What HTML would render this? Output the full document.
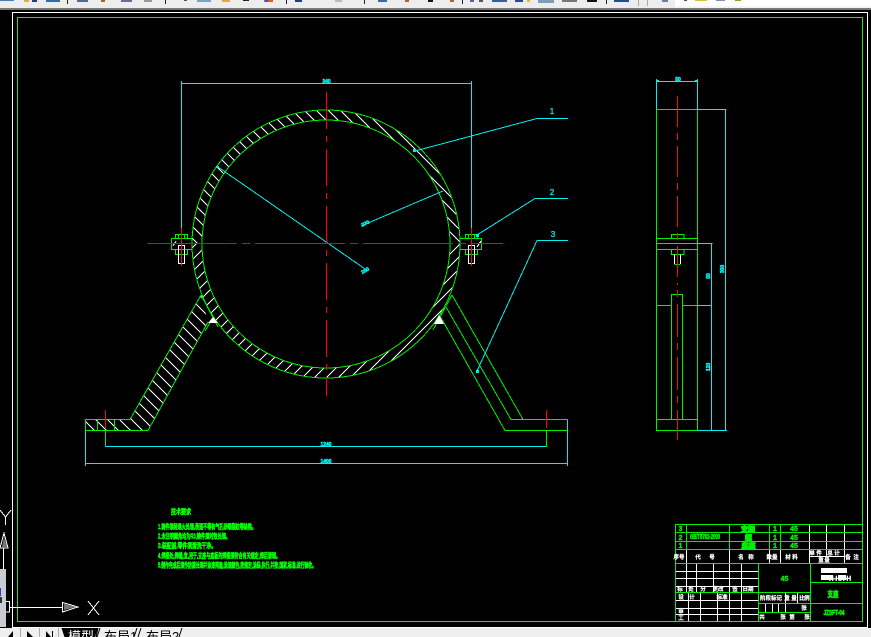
<!DOCTYPE html>
<html lang="zh">
<head>
<meta charset="utf-8">
<title>CAD</title>
<style>
html,body{margin:0;padding:0;background:#000;width:871px;height:637px;overflow:hidden}
svg{display:block;position:absolute;left:0;top:0}
text{font-family:"Liberation Sans","Noto Sans CJK SC",sans-serif}
</style>
</head>
<body>
<svg width="871" height="637" viewBox="0 0 871 637" xmlns="http://www.w3.org/2000/svg">
<defs>
<clipPath id="ct"><path d="M192,244A134,134 0 0 1 460,244L450,244A124,124 0 0 0 202,244Z"/></clipPath>
<clipPath id="cb"><path d="M192,244A134,134 0 0 0 460,244L450,244A124,124 0 0 1 202,244Z"/></clipPath>
<clipPath id="cl"><path d="M85,419L130,419L201,295L208,322L148,430L85,430Z"/></clipPath>
</defs>
<rect width="871" height="637" fill="#000"/>

<!-- toolbar -->
<rect x="0" y="0" width="871" height="8" fill="#ededed"/>
<rect x="0" y="8" width="871" height="2" fill="#777"/>
<rect x="675" y="0" width="196" height="6" fill="#fff"/>
<rect x="675" y="6" width="196" height="2" fill="#f4f4f4"/>
<g fill="#222"><rect x="67" y="0" width="1" height="4"/><rect x="165" y="0" width="1" height="4"/><rect x="286" y="0" width="1" height="4"/><rect x="364" y="0" width="1" height="4"/><rect x="462" y="0" width="1" height="4"/><rect x="606" y="0" width="1" height="4"/></g>
<rect x="0" y="0" width="14" height="1" fill="#4a7fb5"/>
<rect x="24" y="0" width="5" height="2" fill="#d8b23a"/><rect x="32" y="0" width="5" height="2" fill="#1f3f7a"/>
<rect x="46" y="0" width="14" height="2" fill="#2f6fb0"/>
<rect x="77" y="0" width="11" height="2" fill="#566a90"/><rect x="101" y="0" width="4" height="2" fill="#a5651a"/>
<rect x="121" y="0" width="11" height="2" fill="#66708a"/><rect x="144" y="0" width="8" height="2" fill="#999"/>
<rect x="184" y="0" width="3" height="1" fill="#33558a"/><rect x="197" y="0" width="14" height="2" fill="#7aa3d0"/>
<rect x="222" y="0" width="8" height="2" fill="#dfae2e"/><rect x="243" y="0" width="6" height="1" fill="#222"/>
<rect x="264" y="0" width="9" height="2" fill="#e0601e"/><rect x="265" y="0" width="3" height="2" fill="#2a5bc0"/>
<rect x="295" y="0" width="7" height="2" fill="#1f3f7a"/><rect x="335" y="0" width="7" height="2" fill="#bbb"/>
<rect x="378" y="0" width="9" height="2" fill="#3a6aa0"/><rect x="405" y="0" width="4" height="2" fill="#b5622a"/>
<rect x="428" y="0" width="5" height="2" fill="#111"/><rect x="450" y="0" width="4" height="2" fill="#9a6a40"/>
<rect x="470" y="0" width="4" height="2" fill="#556a8a"/><rect x="479" y="0" width="4" height="2" fill="#555"/>
<rect x="492" y="0" width="15" height="2" fill="#3a5f9a"/><rect x="515" y="0" width="8" height="2" fill="#2a4a8a"/><rect x="527" y="0" width="3" height="2" fill="#e0c020"/>
<rect x="538" y="0" width="16" height="3" fill="#7aa0b8"/><rect x="562" y="0" width="15" height="2" fill="#777"/><rect x="587" y="0" width="10" height="2" fill="#111"/>
<rect x="614" y="0" width="15" height="2" fill="#1f4f8a"/><rect x="638" y="0" width="1" height="6" fill="#aaa"/><rect x="647" y="0" width="1" height="6" fill="#aaa"/>
<rect x="662" y="0" width="6" height="2" fill="#6a7f9a"/><rect x="684" y="0" width="3" height="1" fill="#33558a"/><rect x="695" y="0" width="12" height="1" fill="#d8c030"/><rect x="716" y="0" width="9" height="1" fill="#8090a8"/><rect x="735" y="0" width="6" height="1" fill="#a09a20"/>

<g shape-rendering="crispEdges" fill="none" stroke-width="1">
<rect x="12.5" y="12.5" width="855" height="615" stroke="#fff"/>
<rect x="17.5" y="17.5" width="845" height="604" stroke="#22e022"/>
</g>

<!-- hatching: individual lines clipped -->
<g fill="none" stroke="#fff" stroke-width="1" shape-rendering="crispEdges">
<path clip-path="url(#ct)" d="M30,100l200,200M42,100l200,200M54,100l200,200M66,100l200,200M78,100l200,200M90,100l200,200M102,100l200,200M114,100l200,200M126,100l200,200M138,100l200,200M150,100l200,200M162,100l200,200M174,100l200,200M186,100l200,200M198,100l200,200M210,100l200,200M222,100l200,200M234,100l200,200M246,100l200,200M258,100l200,200M270,100l200,200M282,100l200,200M294,100l200,200M306,100l200,200M318,100l200,200M330,100l200,200M342,100l200,200M354,100l200,200M366,100l200,200M378,100l200,200"/>
<path clip-path="url(#cb)" d="M140,240l-200,200M152,240l-200,200M164,240l-200,200M176,240l-200,200M188,240l-200,200M200,240l-200,200M212,240l-200,200M224,240l-200,200M236,240l-200,200M248,240l-200,200M260,240l-200,200M272,240l-200,200M284,240l-200,200M296,240l-200,200M308,240l-200,200M320,240l-200,200M332,240l-200,200M344,240l-200,200M356,240l-200,200M368,240l-200,200M380,240l-200,200M392,240l-200,200M404,240l-200,200M416,240l-200,200M428,240l-200,200M440,240l-200,200M452,240l-200,200M464,240l-200,200M476,240l-200,200M488,240l-200,200M500,240l-200,200M512,240l-200,200M524,240l-200,200"/>
<path clip-path="url(#cl)" d="M-68,280l200,200M-56,280l200,200M-44,280l200,200M-32,280l200,200M-20,280l200,200M-8,280l200,200M4,280l200,200M16,280l200,200M28,280l200,200M40,280l200,200M52,280l200,200M64,280l200,200M76,280l200,200M88,280l200,200M100,280l200,200M112,280l200,200M124,280l200,200M136,280l200,200M148,280l200,200M160,280l200,200M172,280l200,200M184,280l200,200"/>
</g>

<!-- main drawing: green -->
<g fill="none" stroke="#00ee00" stroke-width="1" shape-rendering="crispEdges">
<circle cx="326" cy="244" r="134"/>
<circle cx="326" cy="244" r="124"/>
<path d="M85.5,430.5V419.5H130L201,295M97.5,419.5V430.5M114.5,419.5V430.5M85.5,430.5H148L208,322M105.5,430V447"/>
<path d="M201,295L218,327M213,318L205,331"/>
<path d="M440,316L505,430.5H567.5M446,307L511,419.5H567.5M452,295L523,419.5M546.5,430V447"/>
<path d="M452,295L433,330"/>
<!-- left bolt -->
<path d="M175.5,234.5H187.5V238.5H175.5ZM178.5,234.5V238.5M184.5,234.5V238.5M171.5,238.5H192M171.5,238.5V249.5H192M175.5,249.5V254.5H187.5V249.5M178.5,249.5V254.5M184.5,249.5V254.5M178.5,263.5H184.5"/>
<!-- right bolt -->
<path d="M465.5,234.5H477.5V238.5H465.5ZM468.5,234.5V238.5M474.5,234.5V238.5M460,238.5H481.5V249.5H460M465.5,249.5V254.5H477.5V249.5M468.5,249.5V254.5M474.5,249.5V254.5M468.5,263.5H474.5"/>
<!-- side view -->
<path d="M656.5,109.5H697.5V430.5H656.5ZM656.5,238.5H697.5M656.5,243.5H697.5M656.5,249.5H697.5M671.5,238V234.5H684V238M671.5,250V254.5H684V250M674.5,264.5H680.5"/>
<path d="M671.5,419.5V294.5H682.5V419.5M656.5,305.5H671.5M682.5,305.5H697.5M656.5,419.5H697.5"/>
</g>

<!-- bolts white -->
<g fill="none" stroke="#fff" stroke-width="1" shape-rendering="crispEdges">
<path d="M178.5,245.5H184.5V263.5H178.5Z"/>
<path d="M468.5,245.5H474.5V263.5H468.5Z"/>
<path d="M674.5,254.5V264M680.5,254.5V264"/>
<path d="M173,246L176,241"/>
<path d="M477,247L481,241"/>
</g>
<path d="M213,317L208,323H218ZM439,315L434,324H444Z" fill="#fff"/>

<!-- cyan -->
<g fill="none" stroke="#00eeee" stroke-width="1" shape-rendering="crispEdges">
<path d="M181.5,81V228M471.5,81V228M181.5,83.5H471.5"/>
<path d="M568,118.5H537L415,151M568,198.5H535L477,235M568,240.5H537L477,371"/>
<path d="M218,167L368,271M443,191L361,226"/>
<path d="M85.5,430V466M567.5,419.5V466M105,446.5H546M85,463.5H567"/>
<path d="M656.5,79V109M697.5,79V109M656.5,81.5H697.5M697.5,109.5H726.5M725.5,109V431M697.5,243.5H712.5M711.5,243V431M697.5,305.5H712M697.5,430.5H727"/>
</g>
<g fill="#00eeee">
<rect x="413" y="149" width="3" height="3"/><rect x="476" y="234" width="3" height="3"/><rect x="476" y="370" width="3" height="3"/><rect x="216" y="166" width="3" height="2"/>
<rect x="657" y="80" width="2" height="1"/><rect x="695" y="80" width="2" height="1"/>
</g>
<g fill="#00eeee" font-size="8" text-anchor="middle" stroke="#00eeee" stroke-width=".3">
<text x="552" y="114">1</text><text x="552" y="195">2</text><text x="553" y="237">3</text>
</g>
<g fill="#00eeee" font-size="5" font-weight="bold" text-anchor="middle" stroke="#00eeee" stroke-width=".5">
<text x="326.5" y="83">340</text>
<text x="678" y="81">50</text>
<text x="326" y="446">1240</text>
<text x="326" y="463">1400</text>
<text x="366" y="272" transform="rotate(-30 366 272)">280</text>
<text x="366" y="225" transform="rotate(-25 366 225)">270</text>
<text x="710" y="276" transform="rotate(-90 710 276)">50</text>
<text x="724" y="269" transform="rotate(-90 724 269)">300</text>
<text x="710" y="367" transform="rotate(-90 710 367)">120</text>
</g>

<!-- red centre lines -->
<g stroke="#ee1010" stroke-width="1" fill="none" shape-rendering="crispEdges">
<path d="M326.5,92V396" stroke-dasharray="37 7 6 7" stroke="#ff0000"/>
<path d="M147,243.5H503" stroke-dasharray="90 5 8 5" stroke="#cc1111"/>
<path d="M181.5,228V266M471.5,228V266"/>
<path d="M677.5,96V285" stroke-dasharray="31 6 7 6"/>
<path d="M677.5,290V440" stroke-dasharray="7 7 33 6"/>
<path d="M105.5,410V428M546.5,410V428" stroke="#ff0000"/>
</g>

<!-- technical requirements -->
<g fill="#00ff00" stroke="#00ff00" stroke-width=".8" font-size="7">
<text x="171" y="514" textLength="20" lengthAdjust="spacingAndGlyphs">技术要求</text>
<text x="158" y="529" textLength="98" lengthAdjust="spacingAndGlyphs">1.铸件须经退火处理,表面不得有气孔砂眼裂纹等缺陷。</text>
<text x="158" y="538.5" textLength="72" lengthAdjust="spacingAndGlyphs">2.未注明圆角均为R3,铸件须时效处理。</text>
<text x="158" y="548" textLength="58" lengthAdjust="spacingAndGlyphs">3.装配前,零件须清洗干净。</text>
<text x="158" y="558" textLength="122" lengthAdjust="spacingAndGlyphs">4.焊接处,焊缝,宜,用于,支座与底板的焊接须符合有关规定,焊后清理。</text>
<text x="158" y="567.5" textLength="158" lengthAdjust="spacingAndGlyphs">5.制作完成后须作防腐处理并涂漆两遍,涂漆颜色,按规定,涂装,执行,并按,国家,标准,进行验收。</text>
</g>

<!-- title block lines -->
<g fill="none" stroke-width="1" shape-rendering="crispEdges">
<g stroke="#fff">
<path d="M686.5,549.5V592M729.5,549.5V621M769.5,549.5V563.5M780.5,549.5V563.5M809.5,524V563.5M826.5,524V556M844.5,524V563.5M809.5,556.5H844.5"/>
<path d="M696.5,563.5V592M713.5,563.5V592M741.5,563.5V621M675,571.5H758M675,578.5H758M675,586.5H758M675,600.5H758M675,608.5H758M675,614.5H758"/>
<path d="M688.5,592V621M700.5,592V621M717.5,592V621"/>
<path d="M785.5,592V603M797.5,592V603M765.5,603V612M772.5,603V612M778.5,603V612M785.5,603V612"/>
</g>
<g stroke="#00ee00">
<path d="M675.5,524.5H862.5M675.5,532.5H862M675.5,541.5H862M675.5,549.5H862M675.5,563.5H862M675.5,592.5H810M675.5,524V621"/>
<path d="M686.5,524V549.5M729.5,524V549.5M769.5,524V549.5M780.5,524V549.5"/>
<path d="M758.5,563.5V621.5M810.5,563.5V621.5M810.5,582.5H862M758.5,603.5H862M758.5,612.5H810"/>
</g>
</g>
<g fill="#00ee00" stroke="#00ee00" stroke-width=".4" font-size="7" text-anchor="middle" font-weight="bold">
<text x="680.5" y="531">3</text><text x="680.5" y="540">2</text><text x="680.5" y="548">1</text>
<text x="775" y="531">1</text><text x="775" y="540">1</text><text x="775" y="548">1</text>
<text x="794" y="531">45</text><text x="794" y="540">45</text><text x="794" y="548">45</text>
<text x="784.5" y="581">45</text>
<text x="748" y="531.5" font-size="7" stroke-width="1">支架</text>
<text x="748.5" y="540" font-size="7" stroke-width="1">螺</text>
<text x="748.5" y="548" font-size="7" stroke-width="1">底座</text>
<text x="705" y="539" font-size="7" textLength="30" lengthAdjust="spacingAndGlyphs" stroke-width=".7">GB/T5782-2000</text>
<text x="833" y="597" font-size="8" textLength="11" lengthAdjust="spacingAndGlyphs" stroke-width=".7">支座</text>
<text x="834" y="615" font-size="7" textLength="21" lengthAdjust="spacingAndGlyphs" stroke-width=".7">JZSFT-04</text>
</g>
<!-- white small labels -->
<g fill="#fff" font-size="5.5" text-anchor="middle" font-weight="bold" stroke="#fff" stroke-width=".2">
<text x="679" y="559">序号</text><text x="698" y="559">代</text><text x="712" y="559">号</text><text x="741" y="559">名</text><text x="751" y="559">称</text><text x="772" y="559">数量</text><text x="788" y="559">材</text><text x="795" y="559">料</text>
<text x="812" y="555">单</text><text x="819" y="555">件</text><text x="830" y="555">总</text><text x="837" y="555">计</text>
<text x="821" y="562">重</text><text x="827" y="562">量</text>
<text x="848" y="559">备</text><text x="856" y="559">注</text>
<text x="680" y="591">标</text><text x="691" y="591">处</text><text x="703" y="591">分</text><text x="718" y="591">更改</text><text x="735" y="591">签</text><text x="748" y="591">日期</text>
<text x="681" y="599">设</text><text x="692" y="599">计</text><text x="722" y="599">标准</text>
<text x="681" y="613">审</text><text x="681" y="620">工</text>
<text x="771" y="600">阶段标记</text><text x="787" y="600">重</text><text x="794" y="600">量</text><text x="802" y="600">比</text><text x="807" y="600">例</text>
<text x="804" y="610">张</text>
<text x="762" y="619">共</text><text x="783" y="619">张</text><text x="792" y="619">第</text><text x="807" y="619">张</text>
</g>
<rect x="821" y="568" width="26" height="5" fill="#fff"/>
<rect x="821" y="575" width="12" height="5" fill="#fff"/>
<rect x="838" y="575" width="8" height="5" fill="#fff"/>
<text x="840" y="580.5" fill="#fff" stroke="#fff" stroke-width=".7" font-size="6" text-anchor="middle" textLength="22" lengthAdjust="spacingAndGlyphs">H-HH-H</text>

<!-- UCS icon -->
<rect x="0" y="569" width="6" height="58" fill="#c8ccd2"/>
<rect x="0" y="588" width="1" height="8" fill="#2244aa"/>
<rect x="0" y="597" width="2" height="6" fill="#333"/>
<g fill="none" stroke="#fff" stroke-width="1" shape-rendering="crispEdges">
<path d="M0,510L5.5,517L11,510M5.5,517V525"/>
<path d="M4,533L0,548H8ZM3.5,548V569"/>
<path d="M6,601.5H9.5V612H6M9,607.5H62"/>
<path d="M62.5,602.5L78,607L62.5,612Z"/>
<path d="M88,601L99,615M99,601L88,615"/>
</g>
<path d="M4,537L2,547H7Z" fill="#777"/>
<path d="M64,604L77,607L64,610Z" fill="#777"/>

<!-- bottom tabs -->
<rect x="0" y="628" width="871" height="9" fill="#efefef"/>
<g fill="#000">
<path d="M8,637L13,631V637ZM27,631L33,637H27ZM46,631L51,637H46Z"/>
<rect x="52" y="631" width="1" height="6"/>
<rect x="20" y="628" width="1" height="9" fill="#aaa"/><rect x="39" y="628" width="1" height="9" fill="#aaa"/><rect x="58" y="628" width="1" height="9" fill="#aaa"/>
<path d="M62,628H98L95,637H65Z"/>
</g>
<g fill="none" stroke="#000" stroke-width="1">
<path d="M62,628L65,637M98,628L96,637M100,628L97,637M137,628L134,637M141,628L138,637M182,628L179,637"/>
</g>
<text x="68" y="641" fill="#fff" font-size="13">模型</text>
<text x="104" y="641" fill="#000" font-size="13">布局1</text>
<text x="146" y="641" fill="#000" font-size="13">布局2</text>
</svg>
</body>
</html>
